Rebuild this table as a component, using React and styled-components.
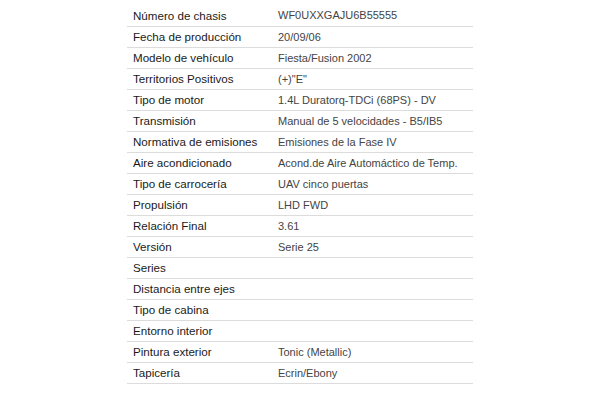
import React from "react";
import styled, { createGlobalStyle } from "styled-components";

const GlobalStyle = createGlobalStyle`
  body {
    margin: 0;
    background: #ffffff;
    font-family: "Liberation Sans", Arial, sans-serif;
  }
`;

const Page = styled.div`
  padding: 5px 0 0 127px;
`;

const Table = styled.table`
  width: 346px;
  border-collapse: collapse;
  table-layout: fixed;
`;

const Row = styled.tr`
  height: 21px;
  border-bottom: 1px solid #dcdcdc;
`;

const Label = styled.td`
  width: 133px;
  padding: 0 6px;
  font-size: 11.6px;
  color: #1a1a1a;
  white-space: nowrap;
  vertical-align: middle;
`;

const Value = styled.td`
  padding: 0 6px;
  font-size: 11px;
  color: #444444;
  white-space: nowrap;
  vertical-align: middle;
`;

const specs = [
  ["Número de chasis", "WF0UXXGAJU6B55555"],
  ["Fecha de producción", "20/09/06"],
  ["Modelo de vehículo", "Fiesta/Fusion 2002"],
  ["Territorios Positivos", "(+)\"E\""],
  ["Tipo de motor", "1.4L Duratorq-TDCi (68PS) - DV"],
  ["Transmisión", "Manual de 5 velocidades - B5/IB5"],
  ["Normativa de emisiones", "Emisiones de la Fase IV"],
  ["Aire acondicionado", "Acond.de Aire Automáctico de Temp."],
  ["Tipo de carrocería", "UAV cinco puertas"],
  ["Propulsión", "LHD FWD"],
  ["Relación Final", "3.61"],
  ["Versión", "Serie 25"],
  ["Series", ""],
  ["Distancia entre ejes", ""],
  ["Tipo de cabina", ""],
  ["Entorno interior", ""],
  ["Pintura exterior", "Tonic (Metallic)"],
  ["Tapicería", "Ecrin/Ebony"],
];

export default function App() {
  return (
    <>
      <GlobalStyle />
      <Page>
        <Table>
          <tbody>
            {specs.map(([label, value]) => (
              <Row key={label}>
                <Label>{label}</Label>
                <Value>{value}</Value>
              </Row>
            ))}
          </tbody>
        </Table>
      </Page>
    </>
  );
}
